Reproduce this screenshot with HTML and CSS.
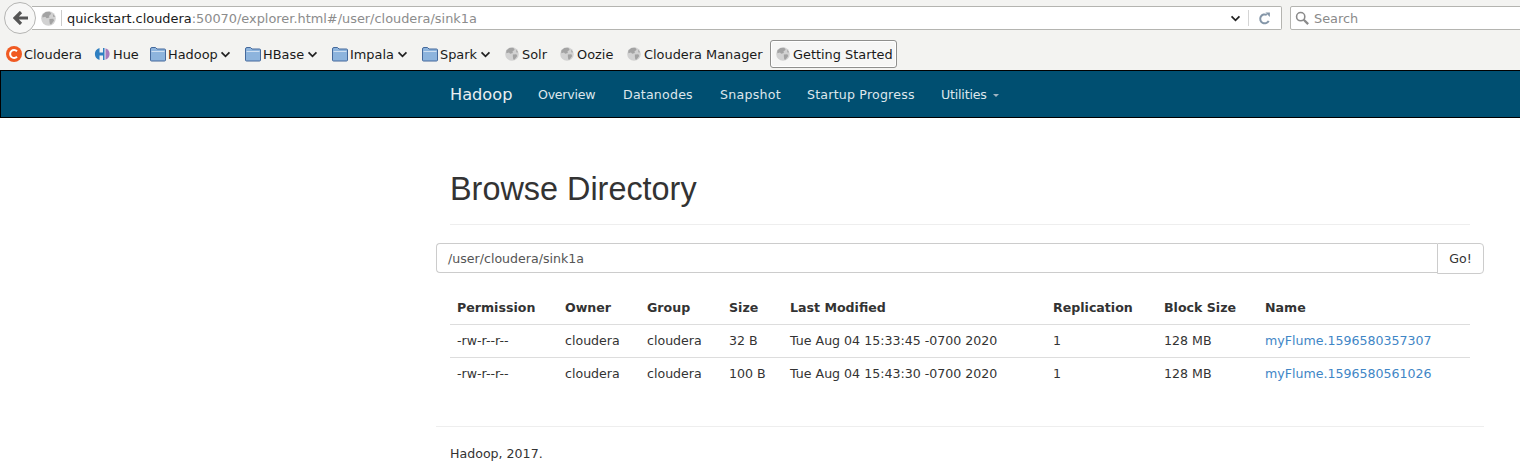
FILE: index.html
```html
<!DOCTYPE html>
<html lang="en">
<head>
<meta charset="utf-8">
<title>Browsing HDFS</title>
<link rel="stylesheet" href="styles.css">
</head>
<body>
<svg class="defs" width="0" height="0" aria-hidden="true">
  <defs>
    <symbol id="globe" viewBox="0 0 16 16">
      <circle cx="8" cy="8" r="7.8" fill="#d2d2d2"/>
      <path d="M5 1 L9.5 .8 L11 3 L8.5 5.2 L9 6.8 L6 7.8 L4.5 6.2 L1.5 7 L1.5 4 Z M9 8.5 L13 8.2 L14 10.2 L11 14.2 L9.5 14.2 L9 11 Z M12.5 2.8 L15 6 L13.2 6.3 Z" fill="#a3a3a3"/>
    </symbol>
    <symbol id="folder" viewBox="0 0 16 16">
      <path d="M.5 3 Q.5 1.5 2 1.5 H5.5 L7 3 H14.5 Q15.5 3 15.5 4 V14 Q15.5 15 14.5 15 H1.5 Q.5 15 .5 14 Z" fill="#8db4dd" stroke="#44699c"/>
      <path d="M1.5 5.5 H14.5" stroke="#cfe0f2" stroke-width="1"/>
    </symbol>
    <symbol id="chev" viewBox="0 0 12 8">
      <path d="M1.5 1.5 L6 6 L10.5 1.5" fill="none" stroke="#222" stroke-width="2"/>
    </symbol>
  </defs>
</svg>
<header class="chrome">
  <div class="nav-row">
    <button class="back" aria-label="Back">
      <svg width="15" height="14" viewBox="0 0 15 14"><path d="M8 1 L2 7 L8 13 M2.5 7 H15" fill="none" stroke="#555" stroke-width="3.2"/></svg>
    </button>
    <div class="urlbar">
      <svg class="url-globe" width="15" height="15"><use href="#globe"/></svg>
      <span class="url-sep"></span>
      <span class="url"><span class="url-host">quickstart.cloudera</span>:50070/explorer.html#/user/cloudera/sink1a</span>
      <svg class="url-drop" width="11" height="7"><use href="#chev"/></svg>
      <span class="url-sep2"></span>
      <svg class="reload" width="13" height="13" viewBox="0 0 14 14"><path d="M11.5 9.5 A4.8 4.8 0 1 1 9.5 3.2" fill="none" stroke="#8496a8" stroke-width="2.2"/><path d="M8 .5 L12.8 .5 V5.5 Z" fill="#8496a8"/></svg>
    </div>
    <div class="searchbar">
      <svg width="14" height="14" viewBox="0 0 16 16"><circle cx="6.5" cy="6.5" r="4.7" fill="none" stroke="#8a8a8a" stroke-width="1.8"/><path d="M10 10 L15 15" stroke="#8a8a8a" stroke-width="2.6"/></svg>
      <span>Search</span>
    </div>
  </div>
  <div class="bm-row">
    <span class="bm bm-cloudera">
      <svg width="16" height="16" viewBox="0 0 16 16"><circle cx="8" cy="8" r="8" fill="#f05a22"/><path d="M11 5.2 A4 4 0 1 0 11 10.8" fill="none" stroke="#fff" stroke-width="2"/></svg>Cloudera</span>
    <span class="bm bm-hue">
      <svg width="16" height="14" viewBox="0 0 16 14"><path d="M5.5 1 A7.5 6.5 0 0 0 5.5 13 V8.5 H9 V13 H10.5 V1 H9 V5.5 H5.5 Z" fill="#2f7fc1"/><path d="M11.5 1.2 A7.5 6.5 0 0 1 11.5 12.8 Z" fill="#a77bbd"/></svg>Hue</span>
    <span class="bm bm-folder w-hadoop"><svg width="16" height="16"><use href="#folder"/></svg>Hadoop<svg class="chev" width="11" height="7"><use href="#chev"/></svg></span>
    <span class="bm bm-folder w-hbase"><svg width="16" height="16"><use href="#folder"/></svg>HBase<svg class="chev" width="11" height="7"><use href="#chev"/></svg></span>
    <span class="bm bm-folder w-impala"><svg width="16" height="16"><use href="#folder"/></svg>Impala<svg class="chev" width="11" height="7"><use href="#chev"/></svg></span>
    <span class="bm bm-folder w-spark"><svg width="16" height="16"><use href="#folder"/></svg>Spark<svg class="chev" width="11" height="7"><use href="#chev"/></svg></span>
    <span class="bm bm-globe w-solr"><svg width="14" height="14"><use href="#globe"/></svg>Solr</span>
    <span class="bm bm-globe w-oozie"><svg width="14" height="14"><use href="#globe"/></svg>Oozie</span>
    <span class="bm bm-globe w-cm"><svg width="14" height="14"><use href="#globe"/></svg>Cloudera Manager</span>
    <span class="bm bm-active"><svg width="14" height="14"><use href="#globe"/></svg>Getting Started</span>
  </div>
</header>
<nav class="navbar">
  <a class="brand">Hadoop</a>
  <a class="nav-item n-overview">Overview</a>
  <a class="nav-item n-datanodes">Datanodes</a>
  <a class="nav-item n-snapshot">Snapshot</a>
  <a class="nav-item n-startup">Startup Progress</a>
  <a class="nav-item n-utilities">Utilities<span class="caret"></span></a>
</nav>
<main class="container">
  <div class="page-header"><h1>Browse Directory</h1></div>
  <div class="input-group">
    <div class="path-input">/user/cloudera/sink1a</div>
    <button class="go">Go!</button>
  </div>
  <table class="listing">
    <colgroup>
      <col class="c1"><col class="c2"><col class="c3"><col class="c4"><col class="c5"><col class="c6"><col class="c7"><col class="c8">
    </colgroup>
    <thead>
      <tr><th>Permission</th><th>Owner</th><th>Group</th><th>Size</th><th>Last Modified</th><th>Replication</th><th>Block Size</th><th>Name</th></tr>
    </thead>
    <tbody>
      <tr><td>-rw-r--r--</td><td>cloudera</td><td>cloudera</td><td>32 B</td><td>Tue Aug 04 15:33:45 -0700 2020</td><td>1</td><td>128 MB</td><td><a>myFlume.1596580357307</a></td></tr>
      <tr><td>-rw-r--r--</td><td>cloudera</td><td>cloudera</td><td>100 B</td><td>Tue Aug 04 15:43:30 -0700 2020</td><td>1</td><td>128 MB</td><td><a>myFlume.1596580561026</a></td></tr>
    </tbody>
  </table>
  <footer class="foot">Hadoop, 2017.</footer>
</main>
</body>
</html>
```
FILE: styles.css
```css
* { box-sizing: border-box; }
html, body { margin: 0; padding: 0; }
body { width: 1520px; height: 472px; overflow: hidden; background: #fff; font-family: "DejaVu Sans", sans-serif; font-size: 12.6px; color: #333; }
.defs { position: absolute; }

.chrome { height: 71px; background: #f3f3f1; border-bottom: 1px solid #000; color: #1a1a1a; font-size: 12.9px; }
.nav-row { height: 38px; display: flex; align-items: flex-start; padding: 6px 0 0 4px; position: relative; }
.back { position: absolute; left: 4px; top: 2px; width: 32px; height: 32px; border-radius: 50%; border: 1px solid #b5b5b3; background: #f7f7f6; padding: 0 0 0 1px; display: flex; align-items: center; justify-content: center; z-index: 1; }
.urlbar { margin-left: 28px; width: 1250px; height: 24px; background: #fff; border: 1px solid #b4b4b0; border-left: 0; border-radius: 0 2px 2px 0; display: flex; align-items: center; padding-left: 9px; }
.url-globe { flex: none; }
.url-sep { width: 1px; height: 16px; background: #ccc; margin: 0 5px 0 5px; }
.url { flex: 1; color: #8c8c8c; white-space: nowrap; }
.url-host { color: #1a1a1a; }
.url-drop { margin-right: 7px; }
.url-sep2 { width: 1px; height: 16px; background: #d5d5d5; margin-right: 9px; }
.reload { margin-right: 10px; }
.searchbar { margin-left: 8px; flex: 1; margin-right: -3px; height: 24px; background: #fff; border: 1px solid #b4b4b0; border-radius: 2px; display: flex; align-items: center; gap: 5px; padding-left: 4px; color: #8a8a8a; }

.bm-row { height: 32px; display: flex; align-items: center; padding: 0 0 0 6px; white-space: nowrap; }
.bm { display: flex; align-items: center; flex: none; }
.bm-cloudera { gap: 2px; width: 88px; }
.bm-hue { gap: 3px; width: 56px; }
.bm-folder { gap: 2px; padding-right: 14px; }
.chev { margin-left: auto; }
.w-hadoop { width: 95px; }
.w-hbase { width: 87px; }
.w-impala { width: 90px; }
.w-spark { width: 83px; }
.bm-globe { gap: 3px; }
.w-solr { width: 55px; }
.w-oozie { width: 67px; }
.w-cm { width: 143px; }
.bm-active { gap: 3px; width: 127px; height: 28px; padding: 0 0 0 5px; border: 1px solid #8f8f8d; border-radius: 3px; background: #f6f6f5; box-shadow: inset 0 0 0 1px #fff; }

.navbar { height: 47px; background: #004f71; border-bottom: 1px solid #000; border-left: 1px solid #000; display: flex; align-items: center; padding-left: 449px; color: #e9eef2; font-size: 12.6px; }
.brand { font-size: 16.2px; width: 88px; }
.nav-item { color: #dde6ec; }
.n-overview { width: 85px; letter-spacing: -.25px; }
.n-datanodes { width: 97px; letter-spacing: .2px; }
.n-snapshot { width: 87px; letter-spacing: .25px; }
.n-startup { width: 134px; letter-spacing: .2px; }
.n-utilities { letter-spacing: -.2px; }
.caret { display: inline-block; margin-left: 6px; vertical-align: middle; border-top: 3px solid #9fb4c1; border-left: 3px solid transparent; border-right: 3px solid transparent; }

.container { width: 1048px; margin-left: 436px; }
.page-header { margin: 0 14px; height: 107px; padding-top: 51px; border-bottom: 1px solid #eee; }
h1 { margin: 0; font-family: "Liberation Sans", sans-serif; font-size: 32.4px; font-weight: 500; line-height: 40px; color: #333; }
.input-group { display: flex; margin-top: 18px; }
.path-input { flex: 1; height: 30px; border: 1px solid #ccc; border-right: 0; border-radius: 4px 0 0 4px; padding: 0 11px; display: flex; align-items: center; color: #555; }
.go { width: 47px; height: 31px; padding: 0; border: 1px solid #ccc; border-radius: 0 4px 4px 0; background: #fff; color: #333; font: inherit; }

.listing { table-layout: fixed; width: 1020px; margin: 17px 14px 0; border-collapse: collapse; }
.c1 { width: 108px; } .c2 { width: 82px; } .c3 { width: 82px; } .c4 { width: 61px; }
.c5 { width: 263px; } .c6 { width: 111px; } .c7 { width: 101px; } .c8 { width: 212px; }
th { text-align: left; font-weight: 700; height: 33px; padding: 0 7px; border-bottom: 1px solid #ddd; }
td { height: 33px; padding: 0 7px; border-bottom: 1px solid #ddd; white-space: nowrap; }
tbody tr:last-child td { border-bottom: 0; }
td a { color: #3f86c6; }

.foot { margin-top: 36px; height: 45px; border-top: 1px solid #eee; padding: 18px 14px 0; line-height: 18px; }
```
